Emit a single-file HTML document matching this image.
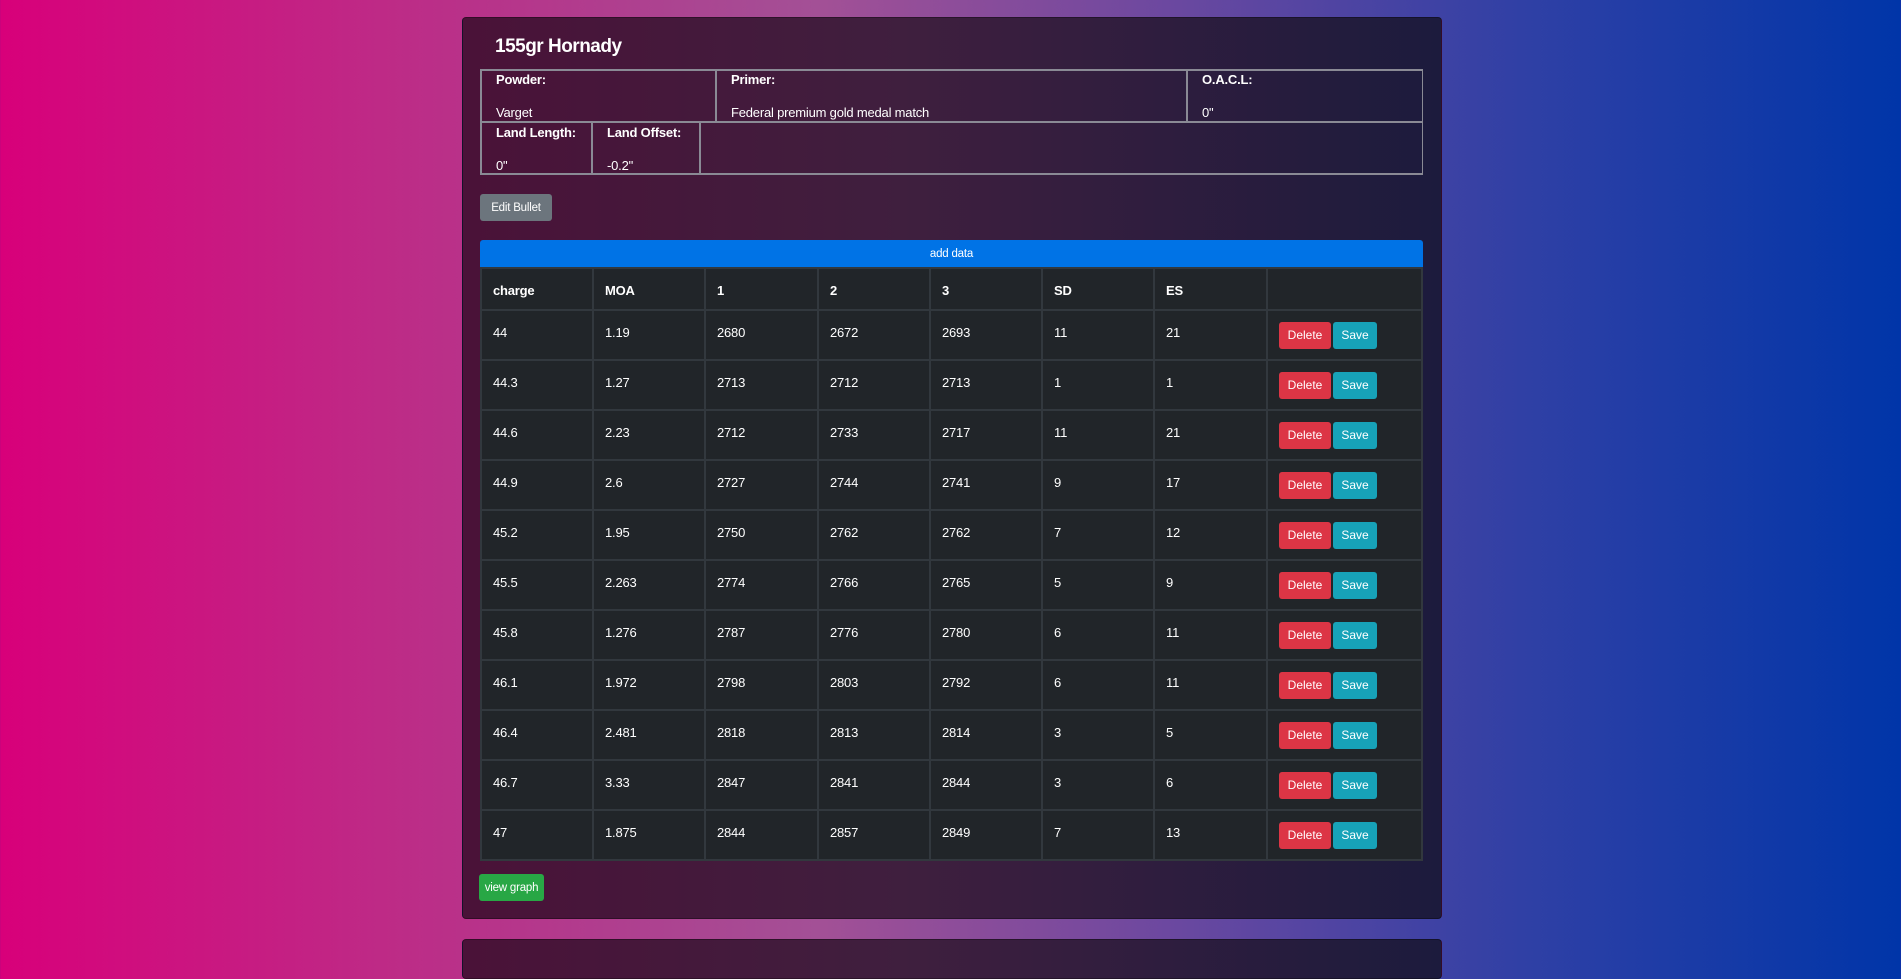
<!DOCTYPE html>
<html><head><style>
*{box-sizing:border-box;margin:0;padding:0}
body{width:1901px;height:953px;overflow:hidden;background:linear-gradient(90deg,#d8007a 0%,#be2a86 20%,#a35096 43%,#6a48a0 62%,#3040a5 80%,#0035a8 100%);font-family:"Liberation Sans",sans-serif;color:#fff;position:relative}
.card{position:absolute;left:462px;width:980px;background:linear-gradient(90deg,#4a1238,#3f1f3e 45%,#1c1b3d);border-radius:4px;border:1px solid rgba(0,0,0,.3)}
.ab{position:absolute;background:#8a8a95}
h1{position:absolute;left:495px;top:36px;font-size:19px;font-weight:bold;letter-spacing:-0.5px}
.lbl{position:absolute;font-size:13px;font-weight:bold;letter-spacing:-0.2px}
.val{position:absolute;font-size:13px;letter-spacing:-0.2px}
.btn{position:absolute;border-radius:3px;font-size:11.5px;display:flex;align-items:center;justify-content:center;letter-spacing:-0.2px}
table{position:absolute;left:480px;top:267px;width:943px;border-collapse:collapse;background:#212529;table-layout:fixed}
td{border:2px solid #32383e;font-size:13px;padding:0 0 0 11px;vertical-align:top;letter-spacing:-0.2px}
tr.h td{height:42px;font-weight:bold;vertical-align:middle;padding-top:2px}
tr.r td{height:50px;padding-top:14px}
.d,.s{display:inline-block;height:27px;line-height:27px;font-size:12px;border-radius:3px;text-align:center;vertical-align:top;letter-spacing:0}
.d{background:#dc3545;width:52px}
.s{background:#17a2b8;width:44px;margin-left:2px}
tr.r td.bt{padding-top:11px}
</style></head><body>
<div class="card" style="top:17px;height:902px"></div>
<div class="card" style="top:939px;height:40px"></div>
<h1>155gr Hornady</h1>
<div class="ab" style="left:480px;top:69px;width:943px;height:1.5px"></div>
<div class="ab" style="left:480px;top:121px;width:943px;height:1.5px"></div>
<div class="ab" style="left:480px;top:173px;width:943px;height:1.5px"></div>
<div class="ab" style="left:480px;top:69px;width:1.5px;height:105px"></div>
<div class="ab" style="left:1421.5px;top:69px;width:1.5px;height:105px"></div>
<div class="ab" style="left:715px;top:69px;width:1.5px;height:53px"></div>
<div class="ab" style="left:1186px;top:69px;width:1.5px;height:53px"></div>
<div class="ab" style="left:591px;top:121px;width:1.5px;height:53px"></div>
<div class="ab" style="left:699px;top:121px;width:1.5px;height:53px"></div>
<div class="lbl" style="left:496px;top:72px">Powder:</div>
<div class="val" style="left:496px;top:105px">Varget</div>
<div class="lbl" style="left:731px;top:72px">Primer:</div>
<div class="val" style="left:731px;top:105px">Federal premium gold medal match</div>
<div class="lbl" style="left:1202px;top:72px">O.A.C.L:</div>
<div class="val" style="left:1202px;top:105px">0"</div>
<div class="lbl" style="left:496px;top:125px">Land Length:</div>
<div class="val" style="left:496px;top:158px">0"</div>
<div class="lbl" style="left:607px;top:125px">Land Offset:</div>
<div class="val" style="left:607px;top:158px">-0.2"</div>
<div class="btn" style="left:480px;top:194px;width:72px;height:27px;background:#6c757d">Edit Bullet</div>
<div class="btn" style="left:480px;top:240px;width:943px;height:27px;background:#0073e6;border-radius:3px 3px 0 0">add data</div>
<table>
<colgroup><col style="width:112px"><col style="width:112px"><col style="width:113px"><col style="width:112px"><col style="width:112px"><col style="width:112px"><col style="width:113px"><col></colgroup>
<tr class="h"><td>charge</td><td>MOA</td><td>1</td><td>2</td><td>3</td><td>SD</td><td>ES</td><td></td></tr>
<tr class="r"><td>44</td><td>1.19</td><td>2680</td><td>2672</td><td>2693</td><td>11</td><td>21</td><td class="bt"><span class="d">Delete</span><span class="s">Save</span></td></tr>
<tr class="r"><td>44.3</td><td>1.27</td><td>2713</td><td>2712</td><td>2713</td><td>1</td><td>1</td><td class="bt"><span class="d">Delete</span><span class="s">Save</span></td></tr>
<tr class="r"><td>44.6</td><td>2.23</td><td>2712</td><td>2733</td><td>2717</td><td>11</td><td>21</td><td class="bt"><span class="d">Delete</span><span class="s">Save</span></td></tr>
<tr class="r"><td>44.9</td><td>2.6</td><td>2727</td><td>2744</td><td>2741</td><td>9</td><td>17</td><td class="bt"><span class="d">Delete</span><span class="s">Save</span></td></tr>
<tr class="r"><td>45.2</td><td>1.95</td><td>2750</td><td>2762</td><td>2762</td><td>7</td><td>12</td><td class="bt"><span class="d">Delete</span><span class="s">Save</span></td></tr>
<tr class="r"><td>45.5</td><td>2.263</td><td>2774</td><td>2766</td><td>2765</td><td>5</td><td>9</td><td class="bt"><span class="d">Delete</span><span class="s">Save</span></td></tr>
<tr class="r"><td>45.8</td><td>1.276</td><td>2787</td><td>2776</td><td>2780</td><td>6</td><td>11</td><td class="bt"><span class="d">Delete</span><span class="s">Save</span></td></tr>
<tr class="r"><td>46.1</td><td>1.972</td><td>2798</td><td>2803</td><td>2792</td><td>6</td><td>11</td><td class="bt"><span class="d">Delete</span><span class="s">Save</span></td></tr>
<tr class="r"><td>46.4</td><td>2.481</td><td>2818</td><td>2813</td><td>2814</td><td>3</td><td>5</td><td class="bt"><span class="d">Delete</span><span class="s">Save</span></td></tr>
<tr class="r"><td>46.7</td><td>3.33</td><td>2847</td><td>2841</td><td>2844</td><td>3</td><td>6</td><td class="bt"><span class="d">Delete</span><span class="s">Save</span></td></tr>
<tr class="r"><td>47</td><td>1.875</td><td>2844</td><td>2857</td><td>2849</td><td>7</td><td>13</td><td class="bt"><span class="d">Delete</span><span class="s">Save</span></td></tr>
</table>
<div class="btn" style="left:479px;top:874px;width:65px;height:27px;background:#28a745">view graph</div>
</body></html>
